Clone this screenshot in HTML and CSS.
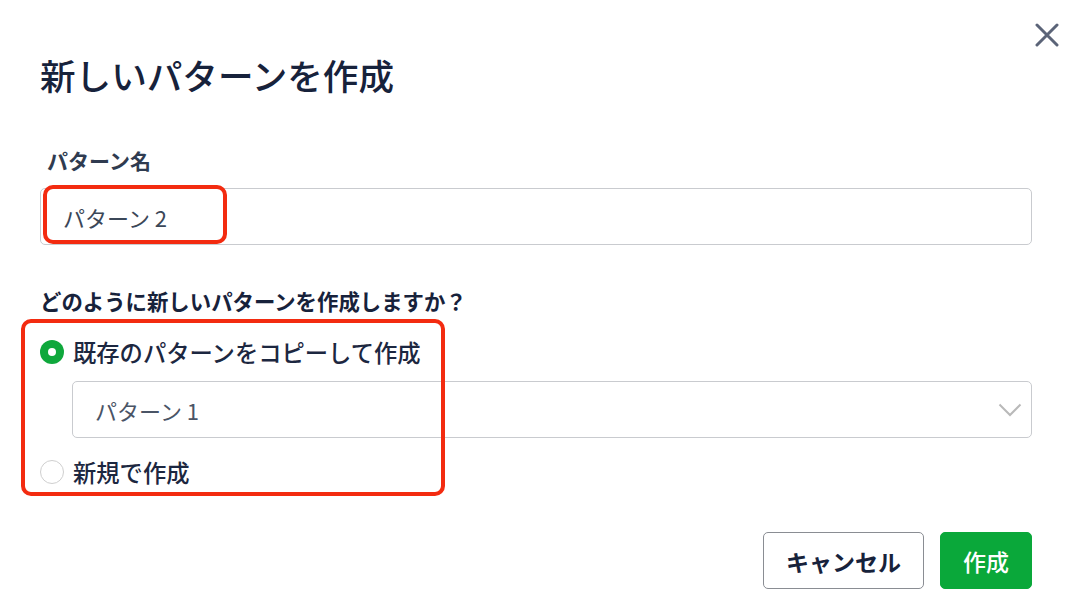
FILE: index.html
```html
<!DOCTYPE html>
<html lang="ja">
<head>
<meta charset="utf-8">
<link rel="stylesheet" href="styles.css">
</head>
<body>
<div class="dialog">
  <button class="close" aria-label="閉じる">
    <svg width="24" height="24" viewBox="0 0 24 24"><path d="M2 2 L22 22 M22 2 L2 22" stroke="#5b6478" stroke-width="3" stroke-linecap="round" fill="none"/></svg>
  </button>
  <h1 class="title">新しいパターンを作成</h1>
  <div class="field-label">パターン名</div>
  <div class="input">パターン 2</div>
  <div class="question">どのように新しいパターンを作成しますか？</div>
  <div class="radio-row">
    <span class="radio checked"></span>
    <span class="radio-label">既存のパターンをコピーして作成</span>
  </div>
  <div class="select">
    <span>パターン 1</span>
    <svg class="chevron" width="24" height="14" viewBox="0 0 24 14"><path d="M1.5 1.5 L12 12 L22.5 1.5" stroke="#b9b9b9" stroke-width="2" fill="none"/></svg>
  </div>
  <div class="radio-row second">
    <span class="radio"></span>
    <span class="radio-label">新規で作成</span>
  </div>
  <div class="actions">
    <button class="btn cancel">キャンセル</button>
    <button class="btn primary">作成</button>
  </div>
  <div class="mark mark-name"></div>
  <div class="mark mark-options"></div>
</div>
</body>
</html>
```
FILE: styles.css
```css
* { box-sizing: border-box; }
html, body { margin: 0; padding: 0; background: #ffffff; }
body {
  font-family: "Noto Sans CJK JP", "Noto Sans", sans-serif;
  color: #1c2740;
}
.dialog {
  position: relative;
  width: 1090px;
  height: 616px;
  padding: 51px 58px 0 40px;
  display: flex;
  flex-direction: column;
}
.close {
  position: absolute;
  top: 23px;
  right: 31px;
  width: 24px;
  height: 24px;
  padding: 0;
  border: none;
  background: none;
  display: flex;
}
.title {
  margin: 0;
  font-size: 35.6px;
  line-height: 48px;
  font-weight: 500;
  color: #17223b;
}
.field-label {
  margin-top: 46px;
  padding-left: 7px;
  font-size: 21px;
  line-height: 30px;
  font-weight: 700;
  color: #2f3b50;
}
.input {
  margin-top: 13px;
  height: 57px;
  border: 1px solid #c9cbcf;
  border-radius: 5px;
  padding: 0 22px;
  display: flex;
  align-items: center;
  font-size: 22px;
  color: #3b4758;
}
.question {
  margin-top: 41px;
  font-size: 21.4px;
  line-height: 30px;
  font-weight: 700;
  color: #17223b;
}
.radio-row {
  margin-top: 19px;
  height: 34px;
  display: flex;
  align-items: center;
  gap: 9px;
}
.radio-row.second { margin-top: 17px; }
.radio {
  width: 24px;
  height: 24px;
  border-radius: 50%;
  border: 1px solid #cfcfcf;
  background: #fff;
  flex: none;
  display: flex;
  align-items: center;
  justify-content: center;
}
.radio.checked {
  border: none;
  background: #0fa83c;
}
.radio.checked::after {
  content: "";
  width: 8px;
  height: 8px;
  border-radius: 50%;
  background: #fff;
}
.radio-label {
  font-size: 23.3px;
  font-weight: 500;
  color: #1c2740;
}
.select {
  margin-top: 12px;
  margin-left: 32px;
  height: 57px;
  border: 1px solid #c9cbcf;
  border-radius: 5px;
  padding: 0 9px 0 22px;
  display: flex;
  align-items: center;
  justify-content: space-between;
  font-size: 22px;
  color: #4a5466;
}
.actions {
  margin-top: 43px;
  display: flex;
  justify-content: flex-end;
  gap: 16px;
}
.btn {
  height: 57px;
  border-radius: 5px;
  font-family: inherit;
  font-size: 23px;
  padding: 0 22px;
  display: flex;
  align-items: center;
  justify-content: center;
}
.cancel {
  width: 161px;
  background: #fff;
  border: 1px solid #8a8d93;
  color: #17223b;
  font-weight: 700;
}
.primary {
  width: 92px;
  background: #0aa83a;
  border: 1px solid #0aa83a;
  color: #fff;
  font-weight: 500;
}
.mark {
  position: absolute;
  border: 4px solid #f32b10;
  border-radius: 10px;
  pointer-events: none;
}
.mark-name {
  left: 43px;
  top: 185px;
  width: 184px;
  height: 59px;
}
.mark-options {
  left: 21px;
  top: 319px;
  width: 424px;
  height: 177px;
}
```
